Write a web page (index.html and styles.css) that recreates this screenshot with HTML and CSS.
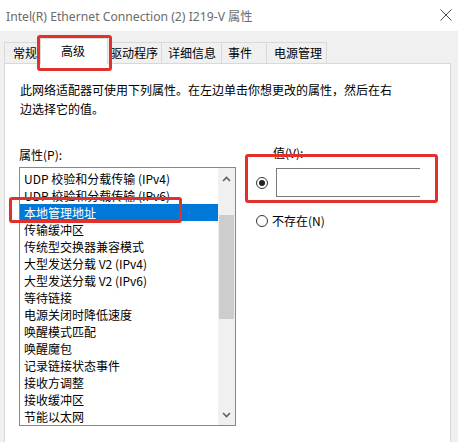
FILE: index.html
```html
<!DOCTYPE html>
<html lang="zh-CN">
<head>
<meta charset="utf-8">
<title>属性</title>
<link rel="stylesheet" href="styles.css">
</head>
<body>
<div class="window">
  <div class="titlebar">
    <span class="title">Intel(R) Ethernet Connection (2) I219-V 属性</span>
    <svg class="close" width="12" height="12" viewBox="0 0 12 12"><path d="M0.5 0.5 L11.5 11.5 M11.5 0.5 L0.5 11.5" stroke="#4a4a4a" stroke-width="1" fill="none"/></svg>
  </div>
  <div class="tabs">
    <div class="tab tab-general">常规</div>
    <div class="tab tab-adv active">高级</div>
    <div class="tab tab-driver">驱动程序</div>
    <div class="tab tab-detail">详细信息</div>
    <div class="tab tab-event">事件</div>
    <div class="tab tab-power">电源管理</div>
  </div>
  <div class="panel">
    <p class="desc">此网络适配器可使用下列属性。在左边单击你想更改的属性，然后在右<br>边选择它的值。</p>
    <div class="cols">
      <div class="left">
        <div class="label">属性(P):</div>
        <div class="listbox">
          <ul class="items">
            <li>UDP 校验和分载传输 (IPv4)</li>
            <li>UDP 校验和分载传输 (IPv6)</li>
            <li class="selected">本地管理地址</li>
            <li>传输缓冲区</li>
            <li>传统型交换器兼容模式</li>
            <li>大型发送分载 V2 (IPv4)</li>
            <li>大型发送分载 V2 (IPv6)</li>
            <li>等待链接</li>
            <li>电源关闭时降低速度</li>
            <li>唤醒模式匹配</li>
            <li>唤醒魔包</li>
            <li>记录链接状态事件</li>
            <li>接收方调整</li>
            <li>接收缓冲区</li>
            <li>节能以太网</li>
          </ul>
          <div class="scrollbar">
            <div class="arrow arrow-up"><svg width="9" height="6" viewBox="0 0 9 6"><path d="M1 5 L4.5 1.5 L8 5" stroke="#606060" stroke-width="1.6" fill="none"/></svg></div>
            <div class="track"><div class="thumb"></div></div>
            <div class="arrow arrow-down"><svg width="9" height="6" viewBox="0 0 9 6"><path d="M1 1 L4.5 4.5 L8 1" stroke="#606060" stroke-width="1.6" fill="none"/></svg></div>
          </div>
        </div>
      </div>
      <div class="right">
        <div class="vlabel">值(V):</div>
        <div class="row row-value"><span class="radio checked"></span><div class="input"></div></div>
        <div class="row row-none"><span class="radio"></span><span class="rtext">不存在(N)</span></div>
      </div>
    </div>
  </div>
  <div class="mark mark-tab"></div>
  <div class="mark mark-item"></div>
  <div class="mark mark-value"></div>
</div>
</body>
</html>
```
FILE: styles.css
```css
* { box-sizing: border-box; }
html, body { margin: 0; padding: 0; }
body {
  width: 458px;
  height: 442px;
  overflow: hidden;
  background: #f0f0f0;
  font-family: "Noto Sans CJK SC", "Noto Sans", sans-serif;
  font-size: 12px;
  color: #000;
}
.window {
  position: relative;
  width: 458px;
  height: 442px;
  display: flex;
  flex-direction: column;
}
.titlebar {
  height: 31px;
  background: #fff;
  display: flex;
  align-items: center;
  justify-content: space-between;
  padding: 0 6px 0 6px;
}
.title {
  font-family: "Noto Sans", "Noto Sans CJK SC", sans-serif;
  font-size: 12.2px;
  color: #6b6b6b;
}
.close { margin-top: -1px; }

.tabs {
  display: flex;
  height: 21px;
  margin-top: 11px;
  padding-left: 4px;
  align-items: flex-end;
  position: relative;
  z-index: 1;
}
.tab {
  height: 21px;
  line-height: 20px;
  border: 1px solid #d9d9d9;
  border-bottom: none;
  border-left: none;
  background: #f0f0f0;
  white-space: nowrap;
}
.tab-general { width: 36px; padding-left: 8px; border-left: 1px solid #d9d9d9; }
.tab-adv { width: 68px; padding-left: 20px; }
.tab-driver { width: 54px; padding-left: 2px; }
.tab-detail { width: 60px; padding-left: 6px; }
.tab-event { width: 45px; padding-left: 6px; }
.tab-power { width: 60px; padding-left: 7px; }
.tab.active {
  background: #fff;
  height: 26px;
  line-height: 24px;
  margin-bottom: -1px;
  border-left: 1px solid #d9d9d9;
}

.panel {
  flex: 1;
  margin-left: 4px;
  width: 447px;
  background: #fff;
  border: 1px solid #d9d9d9;
  border-bottom: none;
}
.desc {
  margin: 16px 0 0 15px;
  line-height: 19px;
  white-space: nowrap;
}
.cols {
  display: flex;
  align-items: flex-start;
}
.left {
  margin: 28px 0 0 14px;
}
.label {
  line-height: 18px;
  margin-bottom: 3px;
}
.listbox {
  width: 217px;
  height: 259px;
  border: 1px solid #828790;
  display: flex;
}
.items {
  list-style: none;
  margin: 0;
  padding: 2px 0 0 0;
  width: 198px;
  overflow: hidden;
}
.items li {
  height: 17px;
  line-height: 17px;
  padding-left: 4px;
  white-space: nowrap;
}
.items li.selected {
  background: #0078d7;
  color: #fff;
}
.scrollbar {
  width: 17px;
  background: #f0f0f0;
  display: flex;
  flex-direction: column;
}
.arrow {
  height: 17px;
  display: flex;
  align-items: center;
  justify-content: center;
}
.arrow-up { padding-top: 5px; }
.arrow-down { padding-bottom: 3px; }
.track { flex: 1; padding-top: 30px; }
.thumb {
  height: 104px;
  background: #cdcdcd;
  margin: 0 1px;
}

.right {
  margin: 26px 0 0 20px;
}
.vlabel {
  line-height: 18px;
  padding-left: 17px;
}
.row {
  display: flex;
  align-items: center;
}
.row-value { margin-top: 6px; }
.row-none { margin-top: 15px; line-height: 18px; }
.radio {
  width: 12px;
  height: 12px;
  border: 1px solid #333;
  border-radius: 50%;
  display: flex;
  align-items: center;
  justify-content: center;
  background: #fff;
}
.radio.checked::after {
  content: "";
  width: 6px;
  height: 6px;
  border-radius: 50%;
  background: #222;
}
.input {
  width: 144px;
  height: 29px;
  margin-left: 8px;
  border: 1px solid #7a7a7a;
  border-right: none;
}
.rtext { margin-left: 4px; }

.mark {
  position: absolute;
  border: 3px solid #e2312b;
  border-radius: 3px;
  z-index: 5;
}
.mark-tab { left: 37px; top: 35px; width: 75px; height: 36px; }
.mark-item { left: 9px; top: 197px; width: 173px; height: 26px; }
.mark-value { left: 245px; top: 154px; width: 193px; height: 49px; }
```
